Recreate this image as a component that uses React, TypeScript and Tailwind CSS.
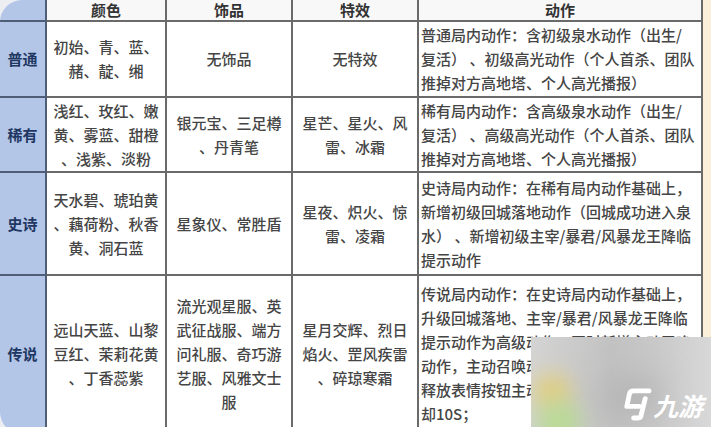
import React from 'react'

type Row = {
  label: string
  color: string[]
  acc: string[]
  fx: string[]
  act: string[]
}

const rows: Row[] = [
  {
    label: '普通',
    color: ['初始、青、蓝、', '赭、靛、缃'],
    acc: ['无饰品'],
    fx: ['无特效'],
    act: [
      '普通局内动作：含初级泉水动作（出生/',
      '复活） 、初级高光动作（个人首杀、团队',
      '推掉对方高地塔、个人高光播报）',
    ],
  },
  {
    label: '稀有',
    color: ['浅红、玫红、嫩', '黄、雾蓝、甜橙', '、浅紫、淡粉'],
    acc: ['银元宝、三足樽', '、丹青笔'],
    fx: ['星芒、星火、风', '雷、冰霜'],
    act: [
      '稀有局内动作：含高级泉水动作（出生/',
      '复活） 、高级高光动作（个人首杀、团队',
      '推掉对方高地塔、个人高光播报）',
    ],
  },
  {
    label: '史诗',
    color: ['天水碧、琥珀黄', '、藕荷粉、秋香', '黄、洞石蓝'],
    acc: ['星象仪、常胜盾'],
    fx: ['星夜、炽火、惊', '雷、凌霜'],
    act: [
      '史诗局内动作：在稀有局内动作基础上，',
      '新增初级回城落地动作（回城成功进入泉',
      '水） 、新增初级主宰/暴君/风暴龙王降临',
      '提示动作',
    ],
  },
  {
    label: '传说',
    color: ['远山天蓝、山黎', '豆红、茉莉花黄', '、丁香蕊紫'],
    acc: ['流光观星服、英', '武征战服、端方', '问礼服、奇巧游', '艺服、风雅文士', '服'],
    fx: ['星月交辉、烈日', '焰火、罡风疾雷', '、碎琼寒霜'],
    act: [
      '传说局内动作：在史诗局内动作基础上，',
      '升级回城落地、主宰/暴君/风暴龙王降临',
      '提示动作为高级动作，同时新增主动召唤',
      '动作，主动召唤动作可通过局内',
      '释放表情按钮主动释放，冷',
      '却10S；',
    ],
  },
]

function Lines({ lines }: { lines: string[] }) {
  return (
    <div>
      {lines.map((l, i) => (
        <div key={i} className="whitespace-pre">
          {l}
        </div>
      ))}
    </div>
  )
}

function Logo() {
  return (
    <div className="flex items-end gap-[1px] text-white">
      <svg width="31" height="35" viewBox="0 0 32 36" fill="none">
        <path
          d="M29 5 H13 Q9 5 8.5 9 L6 21 H19"
          stroke="white"
          strokeWidth="5"
          strokeLinejoin="round"
          strokeLinecap="round"
        />
        <path d="M25 13 L20.5 31 Q20 33 17 33 H13" stroke="white" strokeWidth="5" strokeLinecap="round" />
      </svg>
      <span className="text-[25px] leading-none italic font-semibold mb-[3px]">九游</span>
    </div>
  )
}

export default function App() {
  const cell = 'border-r-2 border-b-2 border-[#6a6a6a] bg-white flex items-center'
  return (
    <div
      className="relative w-[711px] h-[427px] overflow-hidden bg-[linear-gradient(90deg,#eceef2,#f7f5f2_50%,#fcefda)] text-[15px] leading-[24px] font-medium text-[#454545]"
      style={{ fontFamily: '"Noto Sans CJK SC", "Noto Sans", sans-serif' }}
    >
      <div className="w-[703px] h-[434px] rounded-l-[22px] overflow-hidden grid grid-cols-[47px_120px_126px_126px_284px] grid-rows-[22px_76px_75px_103px_158px]">
        {/* header */}
        <div className="bg-[#b3c6e7] border-r-2 border-b-2 border-[#4f5d77]" />
        {['颜色', '饰品', '特效', '动作'].map((h) => (
          <div
            key={h}
            className="border-r-2 border-b-2 border-[#6a6a6a] bg-[#f8f8f8] flex items-center justify-center font-bold text-[#333]"
          >
            {h}
          </div>
        ))}

        {rows.map((r) => (
          <React.Fragment key={r.label}>
            <div className="bg-[#b3c6e7] border-r-2 border-b-2 border-[#4f5d77] flex items-center justify-center font-bold text-[#1f3763]">
              {r.label}
            </div>
            <div className={`${cell} justify-center text-center`}>
              <Lines lines={r.color} />
            </div>
            <div className={`${cell} justify-center text-center`}>
              <Lines lines={r.acc} />
            </div>
            <div className={`${cell} justify-center text-center`}>
              <Lines lines={r.fx} />
            </div>
            <div className={`${cell} pl-[2px]`}>
              <Lines lines={r.act} />
            </div>
          </React.Fragment>
        ))}
      </div>

      {/* watermark overlay */}
      <div className="absolute left-[531px] top-[337px] right-0 bottom-0 overflow-hidden bg-[linear-gradient(90deg,#d4d4d4,#c2c2c2_45%,#c9c9c9_70%,#d8d8d8)]">
        <div className="absolute left-[4px] top-[38px] w-[34px] h-[34px] rounded-full bg-[#e6cf6a] blur-md" />
        <div className="absolute left-[6px] top-[66px] w-[44px] h-[40px] rounded-full bg-[#b6dc8e] blur-md" />
        <div className="absolute left-[70px] top-[40px] w-[60px] h-[40px] rounded-full bg-[#b4b4b4] blur-lg" />
        <div className="absolute left-[90px] bottom-[6px]">
          <Logo />
        </div>
      </div>
    </div>
  )
}
